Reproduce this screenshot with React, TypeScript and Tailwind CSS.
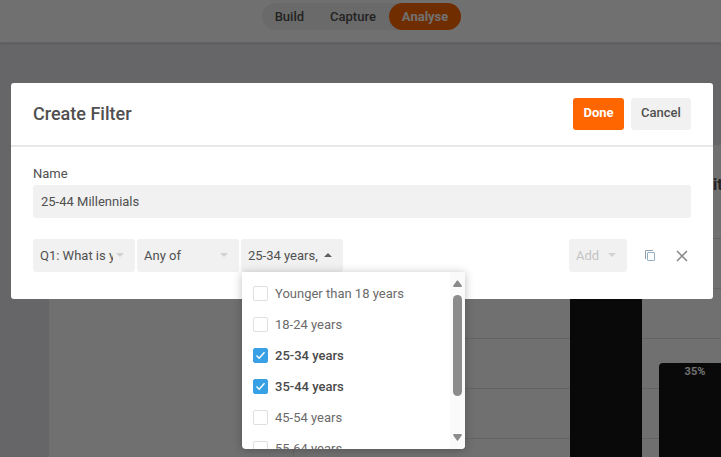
import { useState } from "react";

const ages = [
  "Younger than 18 years",
  "18-24 years",
  "25-34 years",
  "35-44 years",
  "45-54 years",
  "55-64 years",
];

function Caret({ className }: { className: string }) {
  return (
    <svg
      viewBox="0 0 8 4"
      className={`pointer-events-none absolute top-[14px] right-[11px] h-1 w-2 fill-current ${className}`}
    >
      <path d="M0 0h8L4 4z" />
    </svg>
  );
}

function Navbar() {
  return (
    <nav className="flex h-[43px] justify-center border-b border-[#e2e2e4] bg-white pt-[3px] pl-[2px] shadow-sm">
      <div className="flex h-[27px] items-center rounded-full bg-[#f1f1f1] text-[13px] font-medium text-[#505050]">
        <a href="#build" className="px-[13px]">
          Build
        </a>
        <a href="#capture" className="px-[13px]">
          Capture
        </a>
        <a
          href="#analyse"
          className="flex h-[27px] items-center rounded-full bg-[#ff6600] px-[13px] font-bold text-white"
        >
          Analyse
        </a>
      </div>
    </nav>
  );
}

function Chart() {
  return (
    <section className="relative mt-[102px] ml-[49px] h-[312px] bg-white">
      <h2 className="absolute top-7 left-[664px] text-base font-bold whitespace-nowrap text-[#505050]">
        ities
      </h2>
      {/* Grid */}
      <div className="absolute top-[93px] right-0 left-[244px] flex h-[219px] flex-col border-l border-[#e2e2e2]">
        {[0, 1, 2, 3, 4].map((line) => (
          <div key={line} className="h-[50px] shrink-0 border-t border-[#e2e2e2]" />
        ))}
      </div>
      {/* Bars */}
      <div className="absolute top-[92px] left-[521px] flex h-[220px] items-end gap-[17px]">
        <div className="h-full w-[72px] bg-[#161616]" />
        <div className="h-[94px] w-[72px] rounded-t-sm bg-[#161616] pt-[3px] text-center text-[11px] leading-3 font-bold text-white">
          35%
        </div>
      </div>
    </section>
  );
}

function AgeMenu() {
  const [checked, setChecked] = useState(["25-34 years", "35-44 years"]);

  const toggle = (age: string) =>
    setChecked(
      checked.includes(age)
        ? checked.filter((item) => item !== age)
        : [...checked, age]
    );

  return (
    <div className="absolute top-[33px] left-px z-10 flex h-[177px] w-[223px] overflow-hidden rounded-b-sm bg-white shadow-[0_1px_10px_rgba(0,0,0,0.25)]">
      <ul className="flex-1 pt-[6px]">
        {ages.map((age) => (
          <li key={age} className="flex h-[31px] items-center">
            <label
              className={`flex items-center gap-[7px] pl-[11px] whitespace-nowrap ${
                checked.includes(age)
                  ? "font-medium text-[#4a4a4a]"
                  : "text-[#6b6b6b]"
              }`}
            >
              <span className="relative flex">
                <input
                  type="checkbox"
                  checked={checked.includes(age)}
                  onChange={() => toggle(age)}
                  className="peer size-[15px] appearance-none rounded-[2px] border border-[#dfdfdf] bg-white checked:border-[#38a0e4] checked:bg-[#38a0e4]"
                />
                <svg
                  viewBox="0 0 15 15"
                  className="pointer-events-none absolute inset-0 hidden fill-none stroke-white stroke-[1.4] peer-checked:block"
                >
                  <path d="M3.5 7.5l2.7 2.7 5.3-6" />
                </svg>
              </span>
              {age}
            </label>
          </li>
        ))}
      </ul>
      {/* Scrollbar */}
      <div className="flex w-[15px] flex-col items-center bg-[#fafafa] py-2 text-[#8b8b8b]">
        <svg viewBox="0 0 9 7" className="h-[7px] w-[9px] fill-current">
          <path d="M3.8.7Q4.5-.3 5.2.7L8.7 5.6Q9.2 7 8 7H1Q-.2 7 .3 5.6z" />
        </svg>
        <div className="mt-2 h-[101px] w-[9px] rounded-full bg-[#8b8b8b]" />
        <svg viewBox="0 0 9 7" className="mt-auto h-[7px] w-[9px] fill-current">
          <path d="M3.8 6.3Q4.5 7.3 5.2 6.3L8.7 1.4Q9.2 0 8 0H1Q-.2 0 .3 1.4z" />
        </svg>
      </div>
    </div>
  );
}

function FilterDialog() {
  return (
    <div
      role="dialog"
      aria-labelledby="filter-title"
      className="absolute top-[83px] right-2 left-[11px] rounded-[3px] bg-white text-[13px] text-[#505050]"
    >
      <header className="flex h-16 items-center justify-between border-b-2 border-[#e8e8e8] px-[22px]">
        <h1 id="filter-title" className="text-lg font-medium">
          Create Filter
        </h1>
        <div className="flex gap-[7px] pb-px">
          <button className="h-8 w-[51px] rounded-[3px] bg-[#ff6600] pb-[2px] font-bold text-white">
            Done
          </button>
          <button className="h-8 w-[60px] rounded-[3px] bg-[#f1f1f1] pb-[2px] font-medium">
            Cancel
          </button>
        </div>
      </header>

      <form className="px-[22px] pt-[17px] pb-[27px]">
        <label htmlFor="name" className="mb-px block leading-5">
          Name
        </label>
        <input
          id="name"
          defaultValue="25-44 Millennials"
          className="block h-[33px] w-full rounded-[3px] bg-[#f1f1f1] px-2"
        />

        <div className="mt-[21px] flex items-center gap-[2px]">
          <div className="relative">
            <select
              aria-label="Question"
              className="block h-[33px] w-[102px] appearance-none rounded-[3px] bg-[#f1f1f1] pr-[22px] pl-[7px]"
            >
              <option>Q1: What is your age?</option>
            </select>
            <Caret className="text-[#d2d2d2]" />
          </div>
          <div className="relative">
            <select
              aria-label="Condition"
              className="block h-[33px] w-[102px] appearance-none rounded-[3px] bg-[#f1f1f1] pr-[22px] pl-[7px]"
            >
              <option>Any of</option>
            </select>
            <Caret className="text-[#d2d2d2]" />
          </div>
          <div className="relative">
            <button
              type="button"
              aria-expanded="true"
              className="block h-[33px] w-[102px] rounded-[3px] bg-[#f1f1f1] pr-[22px] pl-[7px] text-left"
            >
              <span className="block overflow-hidden whitespace-nowrap">
                25-34 years, 35-44 years
              </span>
            </button>
            <Caret className="rotate-180 text-[#606060]" />
            <AgeMenu />
          </div>
          <div className="relative ml-auto text-[#c4c4c4]">
            <button
              type="button"
              disabled
              className="block h-[33px] w-[58px] rounded-[3px] bg-[#f1f1f1] pl-[7px] text-left"
            >
              Add
            </button>
            <Caret className="text-[#d2d2d2]" />
          </div>
          <button type="button" aria-label="Duplicate" className="ml-4">
            <svg viewBox="0 0 10 11" className="h-[11px] w-[10px] fill-none">
              <path d="M.5 9V1Q.5.5 1 .5H8" stroke="#959ca2" />
              <rect x="2.5" y="2.5" width="7" height="8" rx=".5" stroke="#8fb0c8" />
            </svg>
          </button>
          <button type="button" aria-label="Remove" className="mr-[3px] ml-[19px]">
            <svg
              viewBox="0 0 12 12"
              className="size-3 fill-none stroke-[#888] stroke-[1.5]"
            >
              <path d="M1 1l10 10M11 1L1 11" />
            </svg>
          </button>
        </div>
      </form>
    </div>
  );
}

export default function App() {
  return (
    <div className="relative h-screen overflow-hidden bg-[#e9e9ed] font-['Roboto',sans-serif]">
      <Navbar />
      <Chart />
      <div className="absolute inset-0 bg-black/56" />
      <FilterDialog />
    </div>
  );
}
